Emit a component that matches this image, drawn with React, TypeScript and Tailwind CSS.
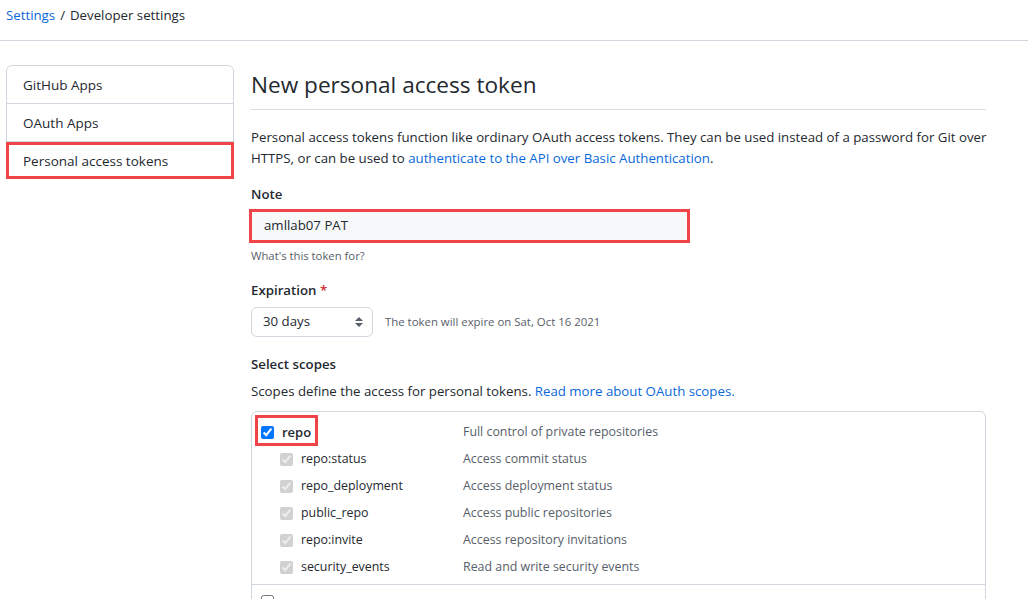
import React from 'react';

const subScopes = [
  { name: 'repo:status', desc: 'Access commit status' },
  { name: 'repo_deployment', desc: 'Access deployment status' },
  { name: 'public_repo', desc: 'Access public repositories' },
  { name: 'repo:invite', desc: 'Access repository invitations' },
  { name: 'security_events', desc: 'Read and write security events' },
];

const App: React.FC = () => {
  return (
    <div className="w-[1028px] h-[599px] overflow-hidden bg-white text-[13.25px] text-[#24292f] font-['Open_Sans',sans-serif]">
      {/* Breadcrumb */}
      <div className="h-[41px] pl-[6px] pt-[5px] border-b border-[#d0d7de] leading-[21px]">
        <a className="text-[#0969da]">Settings</a>
        <span className="mx-[5px]">/</span>
        <span>Developer settings</span>
      </div>

      <div className="flex mt-[24px]">
        {/* Sidebar */}
        <div className="ml-[6px] w-[228px] self-start text-[13.5px]">
          <div className="border border-[#d0d7de] rounded-md">
            <div className="h-[38px] pl-[16px] pt-[1px] flex items-center border-b border-[#d0d7de]">GitHub Apps</div>
            <div className="h-[38px] pl-[16px] pt-[1px] flex items-center border-b border-[#d0d7de]">OAuth Apps</div>
            <div className="h-[37px] -mx-px -mb-px pl-[14px] pt-[1px] flex items-center border-[3px] border-[#f04448]">
              Personal access tokens
            </div>
          </div>
        </div>

        {/* Main */}
        <div className="ml-[17px] w-[735px]">
          <h2 className="text-[22.6px] leading-[40px] pb-[4px] border-b border-[#d8dee4] font-normal">
            New personal access token
          </h2>

          <p className="mt-[17px] leading-[21px] whitespace-nowrap">
            Personal access tokens function like ordinary OAuth access tokens. They can be used instead of a password for Git over
            <br />
            HTTPS, or can be used to <a className="text-[#0969da]">authenticate to the API over Basic Authentication</a>.
          </p>

          <div className="mt-[15px] font-semibold leading-[21px]">Note</div>
          <div className="mt-[4px] -ml-[2px] w-[441px] h-[34px] border-[3px] border-[#f04448] bg-[#f6f8fa] flex items-center pl-[12px]">
            amllab07 PAT
          </div>
          <div className="mt-[4px] text-[11.3px] leading-[18px] text-[#57606a]">What's this token for?</div>

          <div className="mt-[15px] font-semibold leading-[21px]">
            Expiration <span className="text-[#cf222e]">*</span>
          </div>
          <div className="mt-[6px] flex items-center">
            <div className="w-[122px] h-[30px] border border-[#d0d7de] rounded-md flex items-center justify-between pl-[11px] pr-[8px]">
              <span>30 days</span>
              <svg width="10" height="12" viewBox="0 0 10 12">
                <path d="M5 1 L9 5 L1 5 Z" fill="#57606a" />
                <path d="M5 11 L9 7 L1 7 Z" fill="#57606a" />
              </svg>
            </div>
            <span className="ml-[12px] text-[11.4px] text-[#57606a]">The token will expire on Sat, Oct 16 2021</span>
          </div>

          <div className="mt-[17px] font-semibold leading-[21px]">Select scopes</div>
          <div className="mt-[6px] leading-[21px]">
            Scopes define the access for personal tokens. <a className="text-[#0969da]">Read more about OAuth scopes.</a>
          </div>

          <div className="mt-[9px] border border-[#d0d7de] rounded-md text-[12.4px]">
            <div className="pt-[7px] pb-[3px] border-b border-[#d0d7de]">
              <div className="relative flex items-center h-[27px]">
                <div className="w-[211px] flex items-center pl-[9px]">
                  <input type="checkbox" checked readOnly className="w-[13px] h-[13px] m-0" />
                  <span className="ml-[8px] font-semibold text-[13px]">repo</span>
                </div>
                <span className="text-[#57606a]">Full control of private repositories</span>
                <div className="absolute left-[3px] top-[-4px] w-[63px] h-[31px] border-[3px] border-[#f04448]" />
              </div>
              {subScopes.map((s) => (
                <div key={s.name} className="flex items-center h-[27px]">
                  <div className="w-[211px] flex items-center pl-[28px]">
                    <input type="checkbox" checked disabled readOnly className="w-[13px] h-[13px] m-0" />
                    <span className="ml-[8px]">{s.name}</span>
                  </div>
                  <span className="text-[#57606a]">{s.desc}</span>
                </div>
              ))}
            </div>
            <div className="flex items-center h-[27px] pt-[6px]">
              <div className="pl-[9px] flex items-center">
                <input type="checkbox" readOnly className="w-[13px] h-[13px] m-0" />
              </div>
            </div>
          </div>
        </div>
      </div>
    </div>
  );
};

export default App;
